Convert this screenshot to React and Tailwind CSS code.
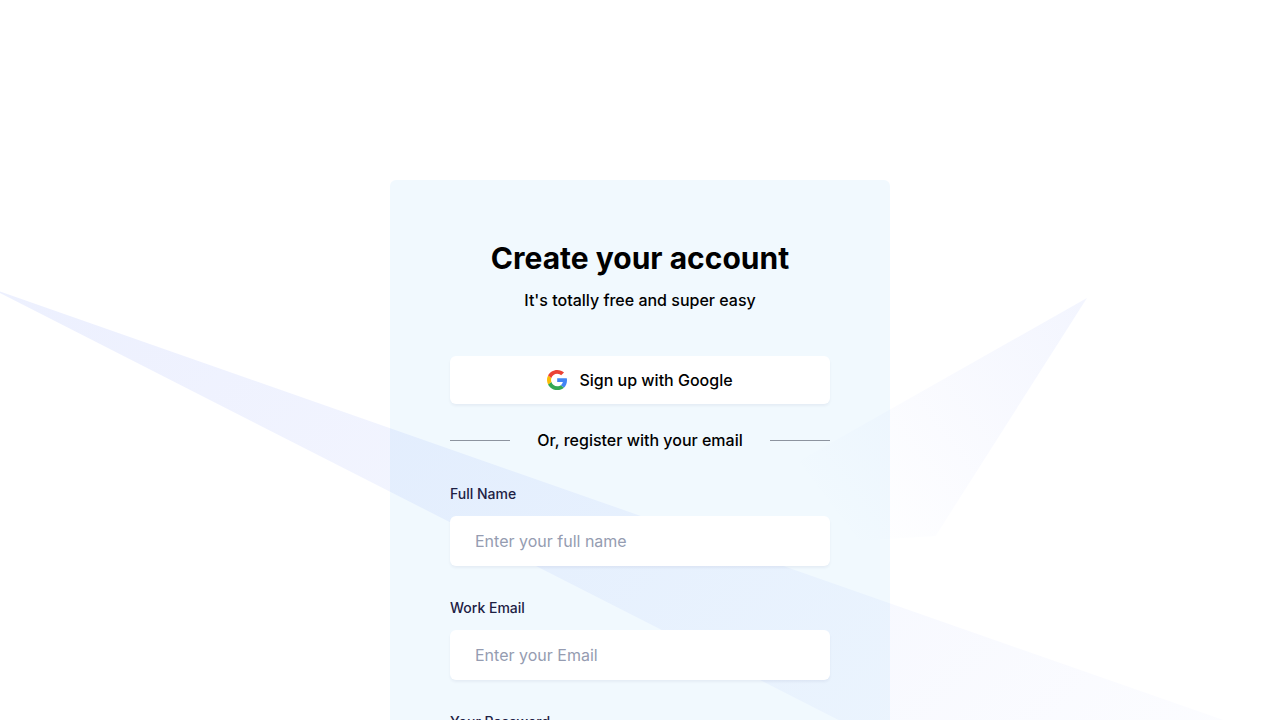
function GoogleIcon() {
  return (
    <svg width="20" height="20" viewBox="0 0 48 48" aria-hidden="true">
      <path
        d="M48 24.54c0-1.97-.16-3.42-.51-4.91H24.49v8.92h13.5c-.27 2.22-1.74 5.55-5.01 7.8l-.05.3 7.28 5.6.5.05C45.34 38.06 48 31.87 48 24.54"
        fill="#4285F4"
      />
      <path
        d="M24.49 48c6.61 0 12.16-2.17 16.22-5.7l-7.73-5.95c-2.07 1.43-4.84 2.43-8.49 2.43-6.48 0-11.98-4.24-13.94-10.18l-.29.02-7.56 5.81-.1.28C6.64 42.64 14.91 48 24.49 48"
        fill="#34A853"
      />
      <path
        d="M10.55 28.6A14.9 14.9 0 0 1 9.73 24c0-1.6.3-3.16.79-4.6l-.01-.31-7.66-5.91-.25.12A24.1 24.1 0 0 0 0 24c0 3.86.95 7.52 2.6 10.7l7.95-6.1"
        fill="#FBBC05"
      />
      <path
        d="M24.49 9.22c4.6 0 7.7 1.97 9.47 3.61l6.91-6.69C36.63 2.28 31.1 0 24.49 0 14.91 0 6.64 5.36 2.6 13.3l7.92 6.1c1.99-5.94 7.49-10.18 13.97-10.18"
        fill="#EB4335"
      />
    </svg>
  )
}

// Decorative beams behind the card
function Beams() {
  return (
    <div className="pointer-events-none absolute inset-0 overflow-hidden">
      <svg
        className="max-w-none"
        width="1440"
        height="969"
        viewBox="0 0 1440 969"
        fill="none"
        aria-hidden="true"
      >
        <defs>
          <linearGradient id="beamRight" x1="1178.4" y1="151.853" x2="780.959" y2="453.581" gradientUnits="userSpaceOnUse">
            <stop stopColor="#4A6CF7" />
            <stop offset="1" stopColor="#4A6CF7" stopOpacity="0" />
          </linearGradient>
          <linearGradient id="beamLeft" x1="160.5" y1="220" x2="1099.45" y2="1192.04" gradientUnits="userSpaceOnUse">
            <stop stopColor="#4A6CF7" />
            <stop offset="1" stopColor="#4A6CF7" stopOpacity="0" />
          </linearGradient>
        </defs>
        <path
          opacity="0.1"
          d="M1086.96 297.978L632.959 554.978L935.625 535.926L1086.96 297.978Z"
          fill="url(#beamRight)"
        />
        <path
          opacity="0.1"
          d="M1324.5 755.5L1450 687V886.5L1324.5 967.5L-10 288L1324.5 755.5Z"
          fill="url(#beamLeft)"
        />
      </svg>
    </div>
  )
}

function Field({ id, label, ...props }) {
  return (
    <div className="mb-8">
      <label htmlFor={id} className="mb-3 block text-sm font-medium text-[#1d2144]">
        {label}
      </label>
      <input
        id={id}
        name={id}
        className="w-full rounded-md border border-transparent bg-white px-6 py-3 text-base text-[#1d2144] placeholder-[#959cb1] shadow-[0_2px_3px_rgba(7,7,77,0.05)] outline-none focus:border-[#4a6cf7]"
        {...props}
      />
    </div>
  )
}

export default function App() {
  return (
    <section className="relative min-h-screen overflow-hidden bg-white pt-45 pb-28 font-['Inter',sans-serif] text-black">
      <Beams />

      <div className="relative mx-auto max-w-[500px] rounded-md bg-[#0e96f5]/6 p-15">
        <h3 className="mb-3 text-center text-3xl font-bold">Create your account</h3>
        <p className="mb-11 text-center text-base font-medium">It's totally free and super easy</p>

        <button
          type="button"
          className="mb-6 flex w-full items-center justify-center gap-3 rounded-md bg-white p-3 text-base font-medium shadow-[0_2px_3px_rgba(7,7,77,0.05)]"
        >
          <GoogleIcon />
          Sign up with Google
        </button>

        <div className="mb-8 flex items-center justify-between">
          <span className="h-px w-15 bg-[#8d949f]" />
          <p className="text-center text-base font-medium">Or, register with your email</p>
          <span className="h-px w-15 bg-[#8d949f]" />
        </div>

        <form>
          <Field id="name" label="Full Name" type="text" placeholder="Enter your full name" />
          <Field id="email" label="Work Email" type="email" placeholder="Enter your Email" />
          <Field id="password" label="Your Password" type="password" />
        </form>
      </div>
    </section>
  )
}
